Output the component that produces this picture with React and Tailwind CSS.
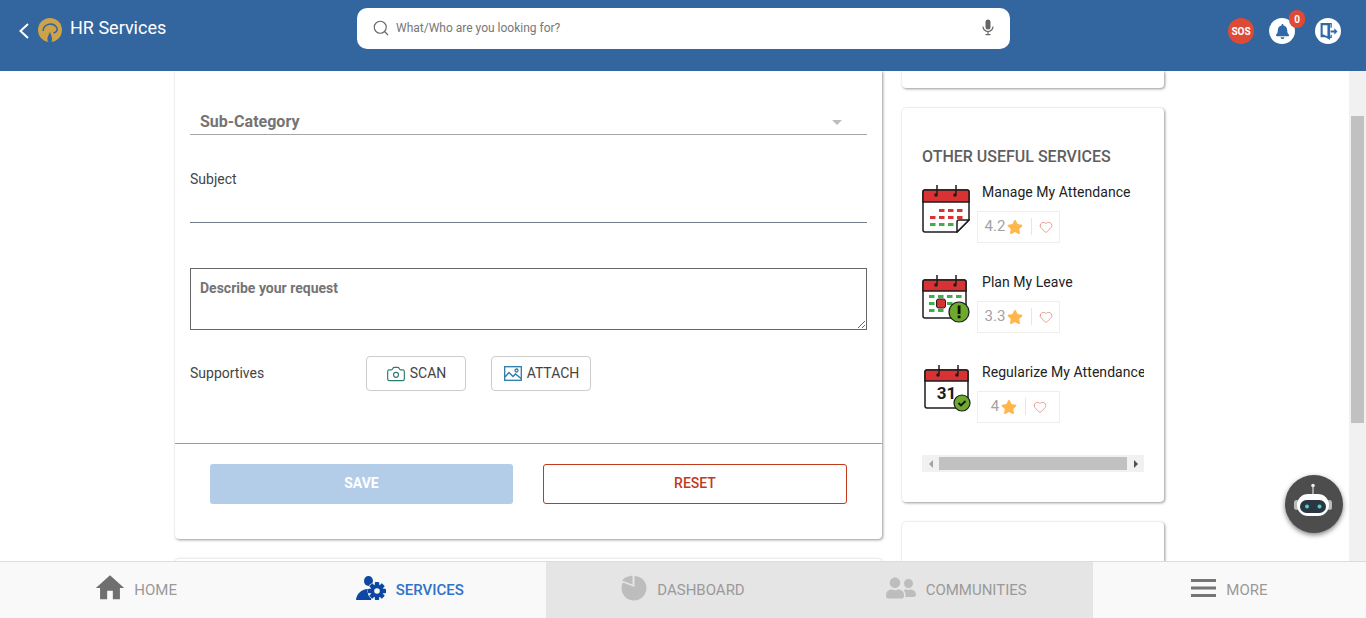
import React from 'react'
import { Camera, Heart, Search } from 'lucide-react'
import { FaBell, FaStar, FaUserFriends } from 'react-icons/fa'
import { MdHome } from 'react-icons/md'

const Rings = () => (
    <g stroke="#1c1c1c" strokeWidth="1.5" fill="#1c1c1c">
        <line x1="15" y1="0" x2="15" y2="9" />
        <line x1="34" y1="0" x2="34" y2="9" />
        <circle cx="14" cy="10" r="1.8" stroke="none" />
        <circle cx="33" cy="10" r="1.8" stroke="none" />
    </g>
)

const Dash = ({ x, y, c }) => <rect x={x} y={y} width="5.5" height="3" fill={c} />

const AttendanceIcon = () => (
    <svg width="48" height="48" viewBox="0 0 48 48" className="shrink-0">
        <path d="M1 7a2 2 0 0 1 2-2h42a2 2 0 0 1 2 2v28l-12 12H3a2 2 0 0 1-2-2z" fill="#fff" stroke="#1c1c1c" strokeWidth="1.5" />
        <path d="M1 7a2 2 0 0 1 2-2h42a2 2 0 0 1 2 2v10H1z" fill="#d93232" stroke="#1c1c1c" strokeWidth="1.5" />
        <path d="M47 35H37a2 2 0 0 0-2 2v10z" fill="#fff" stroke="#1c1c1c" strokeWidth="1.5" />
        <Rings />
        {[17, 26, 35].map((x) => <Dash key={x} x={x} y={24} c="#d93232" />)}
        {[8, 17, 26, 35].map((x) => <Dash key={x} x={x} y={31} c="#d93232" />)}
        {[8, 17, 26].map((x) => <Dash key={x} x={x} y={38} c="#3fae49" />)}
    </svg>
)

const LeaveIcon = () => (
    <svg width="48" height="48" viewBox="0 0 48 48" className="shrink-0">
        <rect x="1" y="5" width="43" height="38" rx="2" fill="#fff" stroke="#1c1c1c" strokeWidth="1.5" />
        <path d="M1 7a2 2 0 0 1 2-2h39a2 2 0 0 1 2 2v9H1z" fill="#d93232" stroke="#1c1c1c" strokeWidth="1.5" />
        <Rings />
        {[7, 16, 25, 34].map((x) => <Dash key={x} x={x} y={20} c="#3fae49" />)}
        {[7, 25].map((x) => <Dash key={x} x={x} y={27} c="#3fae49" />)}
        {[7, 16].map((x) => <Dash key={x} x={x} y={34} c="#3fae49" />)}
        <rect x="14.5" y="24" width="9" height="9" rx="2" fill="#d93232" stroke="#1c1c1c" strokeWidth="1" />
        <circle cx="37" cy="37" r="10" fill="#6ca92d" stroke="#1c1c1c" strokeWidth="1.2" />
        <rect x="35.7" y="30.5" width="2.8" height="8.5" fill="#111" />
        <rect x="35.7" y="40.5" width="2.8" height="2.8" fill="#111" />
    </svg>
)

const RegularizeIcon = () => (
    <svg width="48" height="48" viewBox="0 0 48 48" className="ml-[2px] shrink-0">
        <rect x="1" y="5" width="43" height="38" rx="2" fill="#fff" stroke="#1c1c1c" strokeWidth="1.5" />
        <path d="M1 7a2 2 0 0 1 2-2h39a2 2 0 0 1 2 2v9H1z" fill="#d93232" stroke="#1c1c1c" strokeWidth="1.5" />
        <Rings />
        <text x="22.5" y="34" textAnchor="middle" fontSize="17" fontWeight="700" fontFamily="Roboto, sans-serif" fill="#1c1c1c">31</text>
        <circle cx="38" cy="38" r="8" fill="#6ca92d" stroke="#1c1c1c" strokeWidth="1.2" />
        <path d="M34.5 38l2.5 2.5 4.5-4.5" fill="none" stroke="#111" strokeWidth="1.8" />
    </svg>
)

const services = [
    { title: 'Manage My Attendance', rating: '4.2', Icon: AttendanceIcon },
    { title: 'Plan My Leave', rating: '3.3', Icon: LeaveIcon },
    { title: 'Regularize My Attendance', rating: '4', Icon: RegularizeIcon },
]

const ServiceRow = ({ title, rating, Icon }) => (
    <div className="flex h-[90px] w-[240px]">
        <div className="mt-px w-[55px] shrink-0">
            <Icon />
        </div>
        <div>
            <div className="pl-[5px] text-[14px] leading-4 tracking-[0.05px] text-[#222] whitespace-nowrap">{title}</div>
            <div className="mt-[11px] flex h-8 w-[83px] items-center justify-center border border-[#eee] pb-px">
                <span className="text-[15px] text-[#a3a3a3]">{rating}</span>
                <FaStar size={16} className="ml-[2px] text-[#ffb74d]" />
                <span className="mx-2 h-[17px] w-px bg-[#e6e6e6]" />
                <Heart size={14} strokeWidth={1} className="-mx-px text-[#d9604c]" />
            </div>
        </div>
    </div>
)

const NavItem = ({ icon, label, className = '', labelClass = 'text-[#9a9a9a]' }) => (
    <div className={`flex items-center justify-center gap-[10px] ${className}`}>
        <span className="mb-1 block">{icon}</span>
        <span className={`text-[15px] ${labelClass}`}>{label}</span>
    </div>
)

const gearTeeth = [0, 45, 90, 135]

const ServicesIcon = () => (
    <svg width="30" height="25" viewBox="0 0 30 25" className="text-[#0e47a1]" fill="currentColor">
        <ellipse cx="12.500" cy="5" rx="4.500" ry="5" />
        <path d="M0 24c.5-6 5-10.500 12-11 3 1 5 4 3 11z" />
        <circle cx="21" cy="15" r="9.500" fill="#f9f9f9" />
        {gearTeeth.map((a) => (
            <rect key={a} x="18.800" y="6" width="4.400" height="18" rx="0.800" transform={`rotate(${a} 21 15)`} />
        ))}
        <circle cx="21" cy="15" r="6.500" />
        <circle cx="21" cy="15" r="2.800" fill="#f9f9f9" />
    </svg>
)

const cardShadow = 'shadow-[1px_1px_3px_rgba(0,0,0,0.4),0_0_1px_rgba(0,0,0,0.12)]'

const App = () => {
    return (
        <div className="relative flex h-screen flex-col overflow-hidden bg-white font-['Roboto',sans-serif]">
            <header className="z-10 flex h-[71px] shrink-0 items-start bg-[#33659e]">
                <div className="flex w-[357px] items-start">
                    <svg width="10" height="16" viewBox="0 0 10 16" fill="none" stroke="#fff" strokeWidth="2" className="ml-[19px] mt-[23px]">
                        <path d="M9 1L1.500 8 9 15" />
                    </svg>
                    <svg width="24" height="24" viewBox="0 0 24 24" className="ml-[9px] mt-[18px]">
                        <circle cx="12" cy="12" r="12" fill="#cda349" />
                        <path d="M5 13a7.500 7.500 0 0 1 14-3c.8 2.500-1 4.500-3.500 5" fill="none" stroke="#33659e" strokeWidth="1.500" />
                        <path d="M10.500 24c-2-3-1-5 1.500-10 1 3 3 6 1.500 10z" fill="#33659e" />
                    </svg>
                    <span className="ml-2 mt-[17px] text-[18px] leading-[21px] text-white">HR Services</span>
                </div>
                <div className="mt-2 flex h-[41px] w-[653px] items-center rounded-[10px] bg-white pb-[2px] pl-[15px] pr-[16px]">
                    <Search size={18} strokeWidth={1.5} className="text-[#666]" />
                    <span className="ml-[6px] flex-1 text-[12px] text-[#777]">What/Who are you looking for?</span>
                    <svg width="12" height="17" viewBox="0 0 12 17" fill="#666">
                        <rect x="3.500" y="0.500" width="5" height="10" rx="2.500" />
                        <path d="M1 7.500a5 5 0 0 0 10 0" fill="none" stroke="#666" strokeWidth="1.200" />
                        <rect x="5.400" y="12" width="1.200" height="3.500" />
                        <rect x="3.500" y="15" width="5" height="1.200" />
                    </svg>
                </div>
                <div className="ml-[218px] mt-[18px] flex items-center">
                    <div className="flex h-[26px] w-[26px] items-center justify-center rounded-full bg-[#dd4a36] text-[10px] font-bold text-white">SOS</div>
                    <div className="relative ml-[15px] flex h-[26px] w-[26px] items-center justify-center rounded-full bg-white">
                        <FaBell size={15} className="text-[#2f69a8]" />
                        <span className="absolute -right-[10px] -top-[8px] flex h-[18px] w-4 items-center justify-center rounded-full bg-[#dd4a36] text-[10px] font-bold text-white">0</span>
                    </div>
                    <div className="ml-5 flex h-[26px] w-[26px] items-center justify-center rounded-full bg-white">
                        <svg width="19" height="19" viewBox="0 0 18 18">
                            <path d="M1.500 1h9v16l-4.500-2.500H1.500z" fill="#2f69a8" />
                            <path d="M3.500 3h4.500v10.500l-4.500-2z" fill="#fff" />
                            <path d="M10 1.500h1.500v4M11.500 12v2.500H10" fill="none" stroke="#2f69a8" strokeWidth="1.200" />
                            <path d="M11 8h3.500V6l3 3-3 3v-2H11z" fill="#2f69a8" />
                        </svg>
                    </div>
                </div>
            </header>

            <main className="flex min-h-0 flex-1">
                <div className="flex flex-1 gap-5 overflow-hidden pl-[175px]">
                    <div className="w-[707px] shrink-0">
                        <section className={`h-[468px] rounded-b-[4px] bg-white px-[15px] ${cardShadow}`}>
                            <div className="flex h-[64px] items-end justify-between border-b border-[#a6a6a6] pl-[10px] pr-[25px]">
                                <span className="text-[16px] font-bold text-[#747474]">Sub-Category</span>
                                <span className="mb-[9px] h-0 w-0 border-x-[5px] border-t-[5px] border-x-transparent border-t-[#bdbdbd]" />
                            </div>
                            <div className="mt-[36px] text-[14px] leading-4 text-[#444]">Subject</div>
                            <div className="mt-[35px] border-b border-[#6f7c8a]" />
                            <textarea
                                readOnly
                                placeholder="Describe your request"
                                className="mt-[45px] block h-[62px] w-full border border-[#666] px-[9px] py-[11px] text-[14px] font-bold leading-4 outline-none placeholder:text-[#747474]"
                            />
                            <div className="mt-[26px] flex h-[35px] items-center text-[14px] text-[#444]">
                                <span className="w-[176px]">Supportives</span>
                                <button className="flex h-[35px] w-[100px] items-center justify-center gap-1 rounded-[4px] border border-[#ccc]">
                                    <Camera size={20} strokeWidth={1.4} className="text-[#2f7c6e]" />
                                    SCAN
                                </button>
                                <button className="ml-[25px] flex h-[35px] w-[100px] items-center justify-center gap-[5px] rounded-[4px] border border-[#ccc] pl-px">
                                    <svg width="18" height="15" viewBox="0 0 18 15" fill="none" stroke="#2a7ba8" strokeWidth="1.3">
                                        <rect x="0.700" y="0.700" width="16.600" height="13.600" />
                                        <path d="M1 11l4-4.500 4 4 2.500-2.500 5.500 4.500" />
                                        <circle cx="12.500" cy="4.500" r="1.500" />
                                    </svg>
                                    ATTACH
                                </button>
                            </div>
                            <div className="-mx-[15px] mt-[52px] flex gap-[30px] border-t border-[#a39a96] px-[35px] pt-5">
                                <button className="h-10 w-[303px] rounded-[3px] bg-[#b3cde9] pb-[2px] text-[14px] font-bold text-white">SAVE</button>
                                <button className="h-10 w-[304px] rounded-[3px] border border-[#c3391c] pb-[2px] text-[14px] font-medium text-[#c3391c]">RESET</button>
                            </div>
                        </section>
                        <div className="mt-5 h-10 rounded-t-[4px] shadow-[0_0_3px_rgba(0,0,0,0.2)]" />
                    </div>

                    <div className="w-[262px] shrink-0">
                        <div className={`h-[17px] rounded-b-[4px] ${cardShadow}`} />
                        <section className={`mt-5 h-[394px] rounded-[4px] px-5 pt-[39px] ${cardShadow}`}>
                            <h3 className="text-[16px] font-medium leading-5 text-[#5f5f5f]">OTHER USEFUL SERVICES</h3>
                            <div className="mt-[17px] w-[222px] overflow-hidden">
                                {services.map((s) => <ServiceRow key={s.title} {...s} />)}
                                <div className="mt-px flex h-[17px] items-center bg-[#f1f1f1]">
                                    <div className="flex w-[17px] justify-center">
                                        <span className="h-0 w-0 border-y-4 border-r-4 border-y-transparent border-r-[#a3a3a3]" />
                                    </div>
                                    <div className="h-[13px] w-[188px] bg-[#c1c1c1]" />
                                    <div className="flex w-[17px] justify-center">
                                        <span className="h-0 w-0 border-y-4 border-l-4 border-y-transparent border-l-[#505050]" />
                                    </div>
                                </div>
                            </div>
                        </section>
                        <div className={`mt-5 h-10 rounded-t-[4px] ${cardShadow}`} />
                    </div>
                </div>

                <div className="w-[17px] shrink-0 bg-[#f1f1f1] px-[2px] pt-[45px]">
                    <div className="h-[307px] bg-[#c1c1c1]" />
                </div>
            </main>

            <nav className="grid h-[57px] shrink-0 grid-cols-5 border-t border-[#dcdcdc] bg-[#f9f9f9]">
                <NavItem label="HOME" icon={<MdHome size={34} className="-mx-[3px] text-[#6f6f6f]" />} />
                <NavItem label="SERVICES" labelClass="font-medium text-[#2f72c8]" icon={<ServicesIcon />} />
                <NavItem
                    label="DASHBOARD"
                    className="bg-[#e5e5e5]"
                    icon={
                        <svg width="26" height="26" viewBox="0 0 26 26" fill="#bdbdbd">
                            <path d="M13.500 1C20 1 25.500 6.500 25.500 13S20 25.500 13 25.500 .5 20 .5 13c0-2 .5-4 1.500-5.500L13.500 12z" />
                            <path d="M1 5.500C3 3 6.500 1 11.500 .5v9z" />
                        </svg>
                    }
                />
                <NavItem label="COMMUNITIES" className="bg-[#e5e5e5]" icon={<FaUserFriends size={30} className="text-[#bdbdbd]" />} />
                <NavItem
                    label="MORE"
                    icon={
                        <svg width="25" height="18" viewBox="0 0 25 18" fill="#757575">
                            <rect width="25" height="3" />
                            <rect y="7.500" width="25" height="3" />
                            <rect y="15" width="25" height="3" />
                        </svg>
                    }
                />
            </nav>

            {/* chat bot floats over the page */}
            <div className="absolute left-[1285px] top-[475px] flex h-[58px] w-[58px] items-center justify-center rounded-full bg-[#4d4d4d] shadow-[0_2px_5px_rgba(0,0,0,0.5)]">
                <svg width="44" height="44" viewBox="0 0 44 44">
                    <line x1="21" y1="4" x2="21" y2="13" stroke="#ddd" strokeWidth="1.2" />
                    <circle cx="21" cy="3.500" r="1.800" fill="#eee" />
                    <rect x="2" y="18" width="5" height="10" rx="2.500" fill="#bbb" />
                    <rect x="35" y="18" width="5" height="10" rx="2.500" fill="#bbb" />
                    <rect x="5" y="12" width="32" height="22" rx="11" fill="#fff" />
                    <rect x="8" y="18" width="26" height="13" rx="6.500" fill="#2a3644" />
                    <circle cx="15" cy="24.500" r="2" fill="#4fd1c0" />
                    <circle cx="27.500" cy="24.500" r="2" fill="#4fd1c0" />
                </svg>
            </div>
        </div>
    )
}

export default App
